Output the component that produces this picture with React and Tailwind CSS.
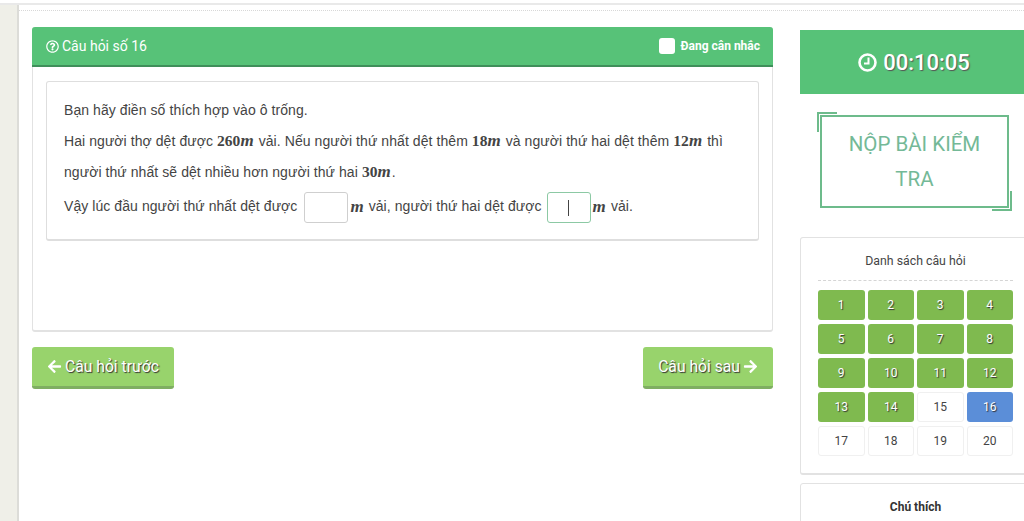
import { FaArrowLeft, FaArrowRight, FaRegQuestionCircle } from "react-icons/fa";

const questions = Array.from({ length: 20 }, (_, i) => i + 1);

const M = ({ children }) => (
  <span className="font-['Liberation_Serif',serif] text-[15.5px] font-bold">{children}</span>
);

const Unit = () => <span className="mr-px font-['Liberation_Serif',serif] text-[17px] font-bold italic">m</span>;

const Cell = ({ n }) => {
  let color = "border border-[#f0f0f0] bg-white text-[#444]";
  if (n < 15) color = "bg-[#7fba4f] text-white [text-shadow:1px_1px_1px_#333]";
  if (n === 16) color = "bg-[#5b8ed8] text-white [text-shadow:1px_1px_1px_#333]";
  return (
    <div className={`flex h-[30px] items-center justify-center rounded-[3px] font-['Roboto',sans-serif] text-[12px] ${color}`}>
      {n}
    </div>
  );
};

const NavButton = ({ children }) => (
  <button className="flex h-[42px] items-center gap-[3px] rounded-[3px] border-b-[3px] border-[#7fae62] bg-[#98d36c] px-[15px] font-['Roboto',sans-serif] text-[15.7px] tracking-normal text-white [text-shadow:1px_1px_1px_#333]">
    {children}
  </button>
);

const ClockIcon = () => (
  <svg width="19" height="19" viewBox="0 0 19 19" fill="none" stroke="currentColor">
    <circle cx="9.5" cy="9.5" r="8" strokeWidth="2.6" />
    <path d="M10.5 4.5v6H6" strokeWidth="2" />
  </svg>
);

export default function App() {
  return (
    <div className="flex h-[521px] flex-col overflow-hidden bg-white pt-[3px] font-['Liberation_Sans',sans-serif] text-[14px] tracking-[0.07px] text-[#444]">
      <div className="h-[2px] shrink-0 bg-[#e9e9e9]"></div>
      <div className="flex min-h-0 flex-1">
        <div className="w-[19px] shrink-0 border-r-2 border-[#dcdcd8] bg-[#efefe8]"></div>
        <div className="min-w-0 flex-1">
          <div className="mt-[5px] border-t border-dotted border-[#d8d8d8]"></div>
          <div className="flex pl-[13px] pt-[16px]">
            <div className="w-[741px] shrink-0">
              <div className="h-[305px] rounded-[3px] border-b-2 border-r border-l border-[#e2e2e2]">
                <div className="-mx-px flex h-[40px] items-center justify-between rounded-t-[3px] border-b-2 border-[#3f8f5a] bg-[#57c278] pl-[14px] pr-[13px] font-['Roboto',sans-serif] tracking-normal text-white">
                  <div className="flex items-center gap-[3px] text-[14px]">
                    <FaRegQuestionCircle className="text-[13px]" />
                    Câu hỏi số 16
                  </div>
                  <div className="flex items-center gap-[6px] text-[12px] font-bold">
                    <span className="h-[16px] w-[16px] rounded-[3px] bg-white"></span>
                    Đang cân nhắc
                  </div>
                </div>
                <div className="mx-[13px] mt-[14px] h-[160px] rounded-[3px] border border-b-2 border-[#dedede] pl-[17px] pr-[18px] pt-[19px]">
                  <p className="leading-[18px]">Bạn hãy điền số thích hợp vào ô trống.</p>
                  <p className="mt-[13px] leading-[18px]">
                    Hai người thợ dệt được <M>260</M><Unit /> vải. Nếu người thứ nhất dệt thêm <M>18</M><Unit /> và người thứ hai dệt thêm <M>12</M><Unit /> thì
                  </p>
                  <p className="mt-[13px] leading-[18px]">
                    người thứ nhất sẽ dệt nhiều hơn người thứ hai <M>30</M><Unit />.
                  </p>
                  <div className="mt-[11px] flex items-center">
                    <span className="pb-[2px]">Vậy lúc đầu người thứ nhất dệt được</span>
                    <span className="ml-[7px] mr-[2px] h-[31px] w-[44px] rounded-[3px] border border-[#cfcfcf]"></span>
                    <span className="pb-[2px]"><Unit /></span>
                    <span className="ml-[4px] pb-[2px]">vải, người thứ hai dệt được</span>
                    <span className="ml-[5px] mr-[2px] flex h-[31px] w-[44px] items-center justify-center rounded-[3px] border border-[#8cc9a4]">
                      <span className="h-[16px] w-px bg-[#444]"></span>
                    </span>
                    <span className="pb-[2px]"><Unit /></span>
                    <span className="ml-[4px] pb-[2px]">vải.</span>
                  </div>
                </div>
              </div>
              <div className="mt-[15px] flex justify-between">
                <NavButton>
                  <FaArrowLeft className="text-[15px]" />
                  Câu hỏi trước
                </NavButton>
                <NavButton>
                  Câu hỏi sau
                  <FaArrowRight className="text-[15px]" />
                </NavButton>
              </div>
            </div>
            <div className="ml-[27px] mt-[3px] w-[240px] shrink-0">
              <div className="flex h-[64px] items-center justify-center bg-[#57c278] pr-[12px] font-['Roboto',sans-serif] text-[22px] font-medium tracking-normal text-white [text-shadow:1px_1px_1px_#555]">
                <span className="flex items-center gap-[6px]">
                  <ClockIcon />
                  00:10:05
                </span>
              </div>
              <div className="relative ml-[20px] mt-[21px] flex h-[93px] w-[189px] items-center justify-center border-2 border-[#6dbb8b] text-center font-['Roboto',sans-serif] text-[20.5px] leading-[35px] tracking-normal text-[#74b997]">
                <span>NỘP BÀI KIỂM<br />TRA</span>
                <span className="absolute -left-[5px] -top-[5px] h-[20px] w-[20px] border-l-2 border-t-2 border-[#6dbb8b]"></span>
                <span className="absolute -bottom-[5px] -right-[5px] h-[20px] w-[20px] border-b-2 border-r-2 border-[#6dbb8b]"></span>
              </div>
              <div className="mt-[29px] h-[238px] rounded-[3px] border border-b-2 border-[#e2e2e2] pl-[17px] pr-[26px]">
                <div className="mx-auto pt-[15px] text-center font-['Roboto',sans-serif] text-[12.3px] leading-[16px] tracking-normal text-[#444]">
                  Danh sách câu hỏi
                </div>
                <div className="mt-[11px] border-t border-dashed border-[#d5d5d5]"></div>
                <div className="mt-[9px] grid grid-cols-4 gap-x-[3px] gap-y-[4px]">
                  {questions.map((n) => (
                    <Cell key={n} n={n} />
                  ))}
                </div>
              </div>
              <div className="mt-[8px] h-[60px] rounded-[3px] border border-[#e2e2e2] pt-[15px] font-['Roboto',sans-serif] text-[12px] font-bold leading-[16px] tracking-normal text-[#333]">
                <div className="ml-[17px] w-[195px] text-center">Chú thích</div>
              </div>
            </div>
          </div>
        </div>
      </div>
    </div>
  );
}
